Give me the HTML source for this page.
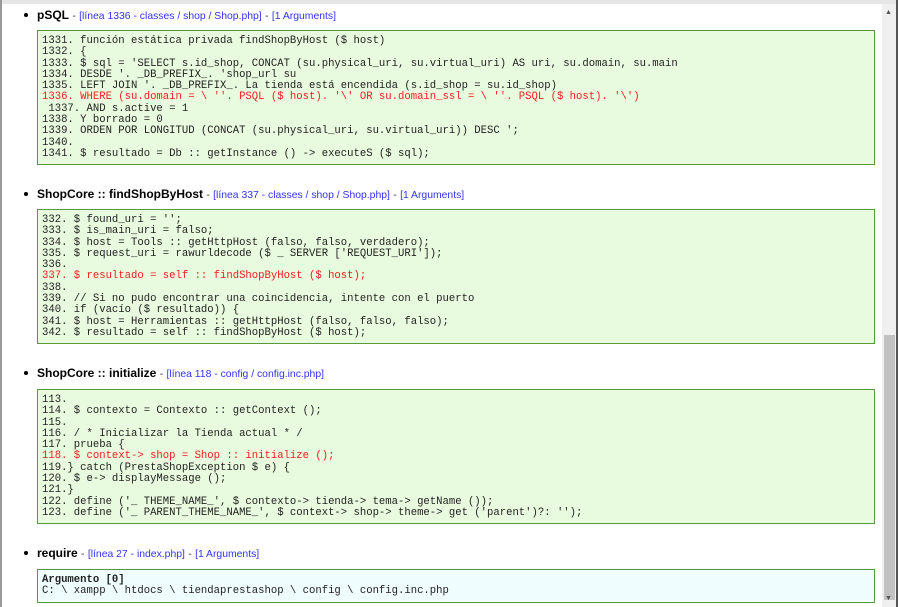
<!DOCTYPE html>
<html><head><meta charset="utf-8"><style>
html,body{margin:0;padding:0;}
body{width:898px;height:607px;overflow:hidden;background:#fff;position:relative;font-family:"Liberation Sans",sans-serif;}
.topband{position:absolute;left:0;top:0;width:898px;height:4px;background:#e6e6e6;}
.lborder{position:absolute;left:0;top:0;width:2px;height:607px;background:#9a9a9a;}
.sb{position:absolute;left:882px;top:4px;width:14px;height:603px;background:#f0f0f0;}
.thumb{position:absolute;left:884px;top:335px;width:11px;height:265px;background:#c1c1c1;}
.rb{position:absolute;left:896px;top:0;width:2px;height:607px;background:#555;}
.arr{position:absolute;left:885px;font-size:7px;color:#505050;}
.h{position:absolute;left:24px;font-size:12px;white-space:nowrap;}
.h .dot{display:inline-block;width:4px;height:4px;border-radius:50%;background:#000;vertical-align:middle;margin-right:9px;position:relative;top:-1px;}
.h b{color:#000;}
.h .d{color:#333;font-size:10.4px;}
.h a{color:#3333ff;font-size:10.4px;text-decoration:none;}
.box{position:absolute;left:37px;width:832px;border:1.5px solid #5a9a3c;background:#e9fbdf;font-family:"Liberation Mono",monospace;font-size:10.6px;line-height:11.3px;color:#222;padding:5px 0 0 4px;white-space:pre;}
.box .r{color:#f02020;}
.box.blue{background:#f0fdff;}
</style></head><body>
<div class="topband"></div>
<div class="lborder"></div>

<div class="h" style="top:8px"><span class="dot"></span><b>pSQL</b> <span class="d">-</span> <a>[línea 1336 - classes / shop / Shop.php]</a> <span class="d">-</span> <a>[1 Arguments]</a></div>
<div class="box" style="top:30px;height:128px">1331. función estática privada findShopByHost ($ host)
1332. {
1333. $ sql = 'SELECT s.id_shop, CONCAT (su.physical_uri, su.virtual_uri) AS uri, su.domain, su.main
1334. DESDE '. _DB_PREFIX_. 'shop_url su
1335. LEFT JOIN '. _DB_PREFIX_. La tienda está encendida (s.id_shop = su.id_shop)
<span class="r">1336. WHERE (su.domain = \ ''. PSQL ($ host). '\' OR su.domain_ssl = \ ''. PSQL ($ host). '\')</span>
 1337. AND s.active = 1
1338. Y borrado = 0
1339. ORDEN POR LONGITUD (CONCAT (su.physical_uri, su.virtual_uri)) DESC ';
1340.
1341. $ resultado = Db :: getInstance () -&gt; executeS ($ sql);</div>

<div class="h" style="top:187px"><span class="dot"></span><b>ShopCore :: findShopByHost</b> <span class="d">-</span> <a>[línea 337 - classes / shop / Shop.php]</a> <span class="d">-</span> <a>[1 Arguments]</a></div>
<div class="box" style="top:209px;height:128px">332. $ found_uri = '';
333. $ is_main_uri = falso;
334. $ host = Tools :: getHttpHost (falso, falso, verdadero);
335. $ request_uri = rawurldecode ($ _ SERVER ['REQUEST_URI']);
336.
<span class="r">337. $ resultado = self :: findShopByHost ($ host);</span>
338.
339. // Si no pudo encontrar una coincidencia, intente con el puerto
340. if (vacío ($ resultado)) {
341. $ host = Herramientas :: getHttpHost (falso, falso, falso);
342. $ resultado = self :: findShopByHost ($ host);</div>

<div class="h" style="top:366px"><span class="dot"></span><b>ShopCore :: initialize</b> <span class="d">-</span> <a>[línea 118 - config / config.inc.php]</a></div>
<div class="box" style="top:389px;height:128px">113.
114. $ contexto = Contexto :: getContext ();
115.
116. / * Inicializar la Tienda actual * /
117. prueba {
<span class="r">118. $ context-&gt; shop = Shop :: initialize ();</span>
119.} catch (PrestaShopException $ e) {
120. $ e-&gt; displayMessage ();
121.}
122. define ('_ THEME_NAME_', $ contexto-&gt; tienda-&gt; tema-&gt; getName ());
123. define ('_ PARENT_THEME_NAME_', $ context-&gt; shop-&gt; theme-&gt; get ('parent')?: '');</div>

<div class="h" style="top:546px"><span class="dot"></span><b>require</b> <span class="d">-</span> <a>[línea 27 - index.php]</a> <span class="d">-</span> <a>[1 Arguments]</a></div>
<div class="box blue" style="top:569px;height:27px"><b>Argumento [0]</b>
C: \ xampp \ htdocs \ tiendaprestashop \ config \ config.inc.php</div>

<div class="sb"></div>
<div class="thumb"></div>
<div class="arr" style="top:9px">▲</div>
<div class="arr" style="top:595px">▼</div>
<div class="rb"></div>
</body></html>
